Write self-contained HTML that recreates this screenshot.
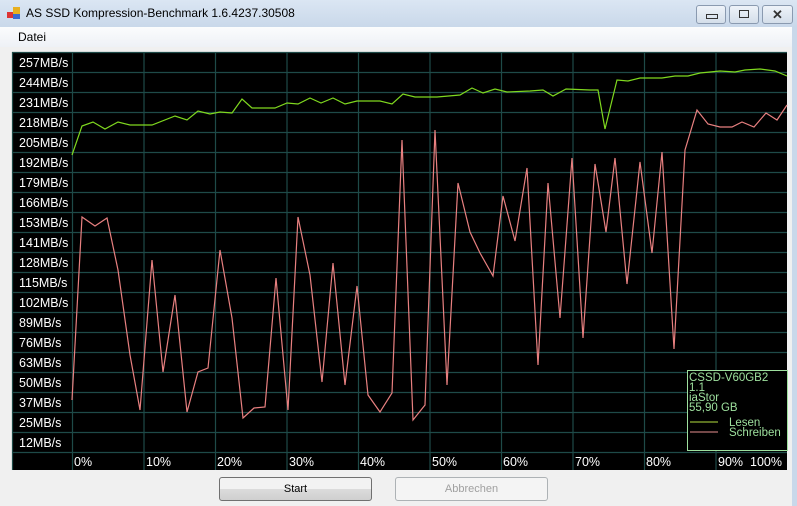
<!DOCTYPE html>
<html><head><style>
body{margin:0;width:797px;height:506px;overflow:hidden;background:#f0f0f0;font-family:"Liberation Sans",sans-serif;position:relative}
.title{position:absolute;left:0;top:0;width:797px;height:27px;background:linear-gradient(#dbe6f3,#c9d8ea);}
.title span{position:absolute;left:26px;top:6px;font-size:12px;color:#000}
.menu{position:absolute;left:0;top:27px;width:797px;height:20px;background:linear-gradient(#fbfcfd,#eef1f6)}
.menu span{position:absolute;left:18px;top:3px;font-size:12px}
.wb{position:absolute;top:5px;height:17px;border:1px solid #8a9ab0;border-radius:3px;background:linear-gradient(#eef3f9,#d4deea)}
.btn{position:absolute;top:477px;width:151px;height:22px;border:1px solid #707070;border-radius:3px;background:linear-gradient(#f2f2f2 50%,#dcdcdc 50%,#cfcfcf);font-size:11px;text-align:center;line-height:22px}
.dis{border-color:#adb2b5;background:#f4f4f4;color:#a0a0a0}
</style></head><body>
<div class="title"><svg width="14" height="14" style="position:absolute;left:7px;top:7px"><rect x="0" y="5" width="6" height="6" fill="#d33"/><rect x="6" y="0" width="7" height="7" fill="#e8b020"/><rect x="6" y="7" width="7" height="5" fill="#3a6ad0"/></svg><span>AS SSD Kompression-Benchmark 1.6.4237.30508</span></div>
<div class="wb" style="left:696px;width:28px"><div style="position:absolute;left:9px;top:8px;width:10px;height:3px;border:1px solid #333"></div></div>
<div class="wb" style="left:729px;width:28px"><div style="position:absolute;left:9px;top:4px;width:8px;height:6px;border:1px solid #333"></div></div>
<div class="wb" style="left:762px;width:29px;text-align:center;font-size:13px;font-weight:bold;color:#333;line-height:17px">✕</div>
<div class="menu"><span>Datei</span></div>
<div style="position:absolute;left:792px;top:27px;width:5px;height:479px;background:#c9d8ea"></div>
<svg style="position:absolute;left:0;top:0" width="797" height="506">
<rect x="12" y="52" width="775" height="418" fill="#000"/>
<g stroke="#1e4a48" stroke-width="1.2">
<line x1="12" y1="52.5" x2="787" y2="52.5"/>
<line x1="12" y1="72.5" x2="787" y2="72.5"/><line x1="12" y1="92.5" x2="787" y2="92.5"/><line x1="12" y1="112.5" x2="787" y2="112.5"/><line x1="12" y1="132.5" x2="787" y2="132.5"/><line x1="12" y1="152.5" x2="787" y2="152.5"/><line x1="12" y1="172.5" x2="787" y2="172.5"/><line x1="12" y1="192.5" x2="787" y2="192.5"/><line x1="12" y1="212.5" x2="787" y2="212.5"/><line x1="12" y1="232.5" x2="787" y2="232.5"/><line x1="12" y1="252.5" x2="787" y2="252.5"/><line x1="12" y1="272.5" x2="787" y2="272.5"/><line x1="12" y1="292.5" x2="787" y2="292.5"/><line x1="12" y1="312.5" x2="787" y2="312.5"/><line x1="12" y1="332.5" x2="787" y2="332.5"/><line x1="12" y1="352.5" x2="787" y2="352.5"/><line x1="12" y1="372.5" x2="787" y2="372.5"/><line x1="12" y1="392.5" x2="787" y2="392.5"/><line x1="12" y1="412.5" x2="787" y2="412.5"/><line x1="12" y1="432.5" x2="787" y2="432.5"/><line x1="12" y1="452.5" x2="787" y2="452.5"/>
<line x1="12.5" y1="52" x2="12.5" y2="470"/>
<line x1="72.5" y1="52" x2="72.5" y2="470"/><line x1="144" y1="52" x2="144" y2="470"/><line x1="215.5" y1="52" x2="215.5" y2="470"/><line x1="287" y1="52" x2="287" y2="470"/><line x1="358.5" y1="52" x2="358.5" y2="470"/><line x1="430" y1="52" x2="430" y2="470"/><line x1="501.5" y1="52" x2="501.5" y2="470"/><line x1="573" y1="52" x2="573" y2="470"/><line x1="644.5" y1="52" x2="644.5" y2="470"/><line x1="716" y1="52" x2="716" y2="470"/>
</g>
<g fill="#fff" font-size="12.5" font-family="Liberation Sans">
<text x="19" y="67">257MB/s</text><text x="19" y="87">244MB/s</text><text x="19" y="107">231MB/s</text><text x="19" y="127">218MB/s</text><text x="19" y="147">205MB/s</text><text x="19" y="167">192MB/s</text><text x="19" y="187">179MB/s</text><text x="19" y="207">166MB/s</text><text x="19" y="227">153MB/s</text><text x="19" y="247">141MB/s</text><text x="19" y="267">128MB/s</text><text x="19" y="287">115MB/s</text><text x="19" y="307">102MB/s</text><text x="19" y="327">89MB/s</text><text x="19" y="347">76MB/s</text><text x="19" y="367">63MB/s</text><text x="19" y="387">50MB/s</text><text x="19" y="407">37MB/s</text><text x="19" y="427">25MB/s</text><text x="19" y="447">12MB/s</text>
<text x="74" y="466">0%</text><text x="146" y="466">10%</text><text x="217" y="466">20%</text><text x="289" y="466">30%</text><text x="360" y="466">40%</text><text x="432" y="466">50%</text><text x="503" y="466">60%</text><text x="575" y="466">70%</text><text x="646" y="466">80%</text><text x="718" y="466">90%</text><text x="750" y="466">100%</text>
</g>
<polyline fill="none" stroke="#7fd81f" stroke-width="1.2" points="72,155 82,126 93,122 105,129 118,122 130,125 152,125 175,116 187,120 198,111 210,114 220,112 232,113 242,99 252,108 275,108 287,103 298,104 310,98 321,103 333,98 345,104 357,101 380,101 392,104 403,94 415,97 437,97 460,95 472,88 483,93 495,89 507,92 530,91 543,90 553,96 566,89 590,90 598,90 605,129 617,80 628,81 640,78 662,78 675,76 688,76 700,73 720,71 735,72 745,70 760,69 775,71 787,76"/>
<polyline fill="none" stroke="#e88080" stroke-width="1.2" points="72,400 82,217 95,226 107,218 118,270 130,355 140,410 152,260 163,372 175,295 187,412 198,372 208,368 220,250 232,318 243,418 254,408 265,407 276,278 288,410 298,217 310,275 322,382 333,263 345,385 357,286 368,395 380,412 392,393 402,140 413,420 425,405 435,130 447,385 458,183 470,232 480,253 493,276 503,196 515,241 527,168 538,365 548,183 560,318 572,158 583,338 595,164 606,232 615,158 627,284 640,162 652,253 662,152 674,349 685,150 697,110 708,124 720,127 732,127 742,122 754,127 766,113 777,120 787,105"/>
<rect x="687.5" y="370.5" width="100" height="80" fill="#000" stroke="#9ee09e"/>
<g fill="#9ee09e" font-size="11.5" font-family="Liberation Sans">
<text x="689" y="381">CSSD-V60GB2</text><text x="689" y="391">1.1</text><text x="689" y="401">iaStor</text><text x="689" y="411">55,90 GB</text>
<text x="729" y="426">Lesen</text><text x="729" y="436">Schreiben</text></g>
<line x1="690" y1="422" x2="718" y2="422" stroke="#b4e040"/>
<line x1="690" y1="432" x2="718" y2="432" stroke="#e89090"/>
</svg>
<div class="btn" style="left:219px">Start</div>
<div class="btn dis" style="left:395px">Abbrechen</div>
</body></html>
